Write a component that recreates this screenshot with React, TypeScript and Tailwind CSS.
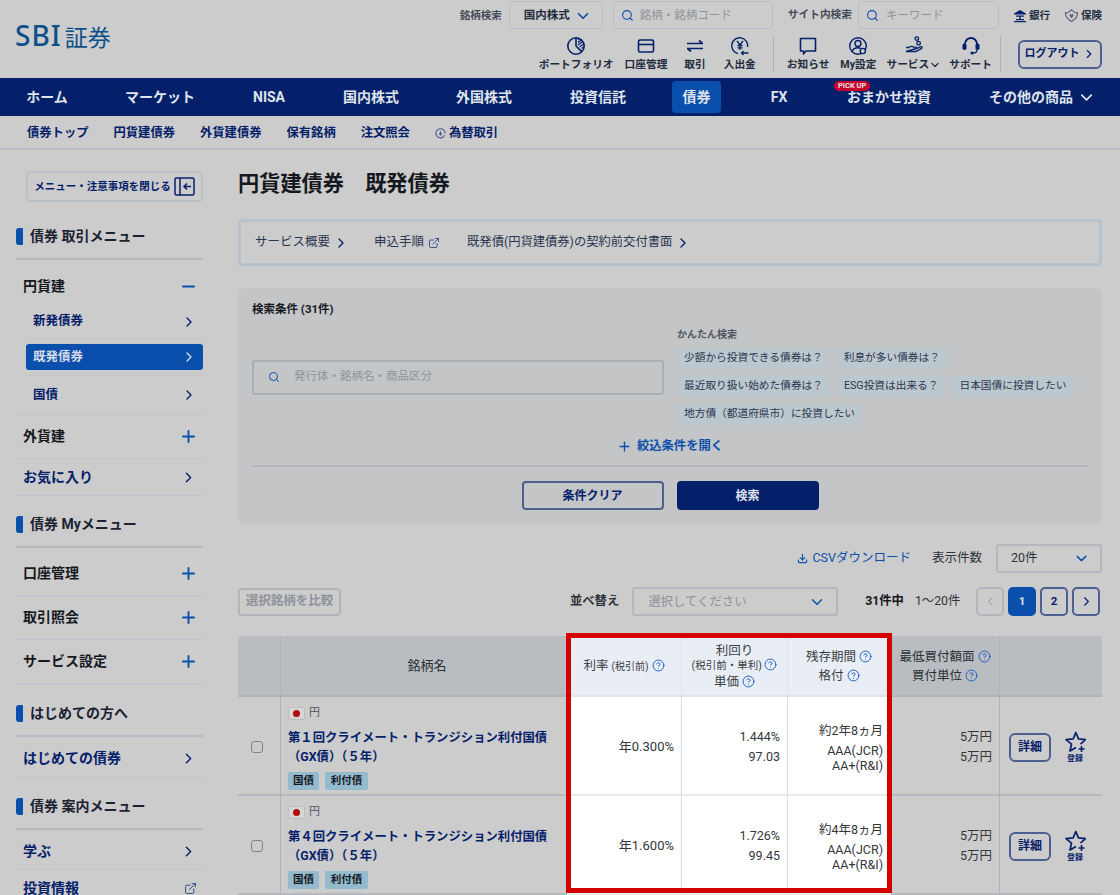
import { ChevronDown, ChevronLeft, ChevronRight, CircleHelp, Download, ExternalLink, Minus, Plus, Search } from "lucide-react";
import type { ReactNode } from "react";

const NAVY = "text-[#04206a]";

function PortfolioIcon() {
  return (
    <svg width="20" height="20" viewBox="0 0 20 20" fill="none" stroke="#04206a" strokeWidth="1.6">
      <circle cx="10" cy="10" r="8.2" />
      <path d="M10 2v8l5.6 5.6" />
      <path d="M12 4l1.5-1M12 6.5l4-3M12 9l5-3.8M13.5 11l4-3M15.5 12.5l2.4-1.8" strokeWidth="1.1" />
    </svg>
  );
}

function CardIcon() {
  return (
    <svg width="20" height="20" viewBox="0 0 20 20" fill="none" stroke="#04206a" strokeWidth="1.6">
      <rect x="2.5" y="4" width="15" height="12" rx="1.5" />
      <path d="M2.5 8.5h15" />
    </svg>
  );
}

function SwapIcon() {
  return (
    <svg width="20" height="20" viewBox="0 0 20 20" fill="none" stroke="#04206a" strokeWidth="1.7">
      <path d="M2 7.5h16M14 4.5l3.5 3M18 12.5H2M6 15.5l-3.5-3" />
    </svg>
  );
}

function YenIcon() {
  return (
    <svg width="20" height="20" viewBox="0 0 20 20" fill="none" stroke="#04206a" strokeWidth="1.4">
      <path d="M8 17.6A8 8 0 1 1 17.6 11" />
      <path d="M7 5l3 4 3-4M10 9v5M7.5 9.5h5M7.5 11.8h5" strokeWidth="1.3" />
      <path d="M11.5 17h7M13.5 15l-2 2 2 2" strokeWidth="1.3" />
    </svg>
  );
}

function ChatIcon() {
  return (
    <svg width="20" height="20" viewBox="0 0 20 20" fill="none" stroke="#04206a" strokeWidth="1.6">
      <path d="M2.5 2.5h15v12.5H8l-2.5 3v-3h-3z" strokeLinejoin="round" />
    </svg>
  );
}

function UserGearIcon() {
  return (
    <svg width="20" height="20" viewBox="0 0 20 20" fill="none" stroke="#04206a" strokeWidth="1.4">
      <circle cx="10" cy="10" r="8.3" />
      <circle cx="10" cy="7.5" r="3" />
      <path d="M4.2 15.5c.8-2.6 3-3.7 5.8-3.7 1 0 2 .2 2.6.5" />
      <circle cx="14.8" cy="15" r="2.6" fill="#cccccc" />
    </svg>
  );
}

function HandIcon() {
  return (
    <svg width="20" height="20" viewBox="0 0 20 20" fill="none" stroke="#04206a" strokeWidth="1.3">
      <circle cx="12.8" cy="2.6" r="1.8" />
      <circle cx="14.6" cy="7.2" r="1.8" />
      <path d="M2 11.5h3c1.5-1.4 3-1.4 4.5-.4h2.5c1.2 0 1.2 1.8 0 1.8H9M13 12.5l3.8-1.8c1.2-.5 1.8 1 .8 1.7L12 15.5H2z" />
    </svg>
  );
}

function HeadsetIcon() {
  return (
    <svg width="20" height="20" viewBox="0 0 20 20" fill="none" stroke="#04206a" strokeWidth="1.8">
      <path d="M4 9.5V8a6 6 0 0 1 12 0v1.5" />
      <rect x="1.5" y="7.5" width="4" height="6.5" rx="1.8" fill="#04206a" stroke="none" />
      <rect x="14.5" y="7.5" width="4" height="6.5" rx="1.8" fill="#04206a" stroke="none" />
      <path d="M16 14c0 2-1.5 3-4 3" strokeWidth="1.3" />
      <circle cx="11" cy="17" r="1.5" fill="#04206a" stroke="none" />
    </svg>
  );
}

function BankIcon() {
  return (
    <svg width="14" height="14" viewBox="0 0 14 14" fill="#04206a">
      <path d="M7 1L13 4.5V5.5H1V4.5z" />
      <rect x="3" y="6.5" width="8" height="1.2" />
      <rect x="6.3" y="7" width="1.4" height="3.5" />
      <rect x="3" y="10" width="8" height="1.2" />
      <rect x="1" y="12" width="12" height="1.2" />
    </svg>
  );
}

function ShieldHeartIcon() {
  return (
    <svg width="15" height="15" viewBox="0 0 16 16" fill="none" stroke="#5b6679" strokeWidth="1.3">
      <path d="M8 14.5C3 11.5 1.2 8.5 1.6 5c1.2.5 2.4.3 3.4-.6L8 1.8l3 2.6c1 .9 2.2 1.1 3.4.6.4 3.5-1.4 6.5-6.4 9.5z" />
      <path d="M8 10.8C6 9.2 5.4 8 6 7c.6-.8 1.5-.6 2 .2.5-.8 1.4-1 2-.2.6 1 0 2.2-2 3.8z" fill="#5b6679" stroke="none" />
    </svg>
  );
}

function StarPlusIcon() {
  return (
    <svg width="22" height="23" viewBox="0 0 22 23" fill="none" stroke="#04206a" strokeWidth="1.7" strokeLinejoin="round">
      <path d="M12 16.4L6 20l1.5-6.8L2 8.6l7.2-.7L11.8 1.5l2.7 6.4 7 .7-5 4.5" />
      <path d="M17.5 15v6M14.5 18h6" strokeWidth="1.6" />
    </svg>
  );
}

function ToolItem({ icon, label, className }: { icon: ReactNode; label: ReactNode; className?: string }) {
  return (
    <div className={`flex flex-col items-center ${className ?? ""}`}>
      <div className="flex h-[20px] items-center">{icon}</div>
      <span className="mt-[2px] flex items-center whitespace-nowrap text-[10.7px] font-bold leading-[14px] text-[#222b3d]">{label}</span>
    </div>
  );
}

function Header() {
  return (
    <header className="flex h-[78px] justify-between">
      <div className="flex items-baseline pl-[15px] pt-[18px] leading-[34px] text-[#0d5089]">
        <span className="text-[28px] font-medium tracking-[1px]" style={{ fontFamily: "'Noto Sans', sans-serif" }}>SBI</span>
        <span className="ml-[3px] text-[23px]" style={{ fontFamily: "'Noto Sans CJK JP', sans-serif" }}>証券</span>
      </div>
      <div className="flex flex-col items-end pr-[18px] pt-px">
        <div className="flex h-[28px] items-center">
          <span className="mr-[7px] pt-px text-[10.5px] font-bold text-[#444b58]">銘柄検索</span>
          <div className="flex h-[28px] w-[94px] items-center justify-between rounded border border-[#b9bec6] pl-[14px] pr-[10px] pt-px text-[11.5px] font-bold text-[#222b3d]">
            国内株式 <ChevronDown size={18} strokeWidth={2.2} className="text-[#0b4ba8]" />
          </div>
          <div className="ml-[10px] flex h-[28px] w-[160px] items-center gap-[6px] rounded border border-[#b9bec6] pl-[7px] pt-px text-[11.5px] text-[#8e939b]">
            <Search size={13} strokeWidth={2} className="text-[#0b4ba8]" /> 銘柄・銘柄コード
          </div>
          <span className="ml-[15px] mr-[6px] pt-px text-[10.7px] font-bold text-[#444b58]">サイト内検索</span>
          <div className="flex h-[28px] w-[141px] items-center gap-[7px] rounded border border-[#b9bec6] pl-[7px] pt-px text-[11.5px] text-[#8e939b]">
            <Search size={13} strokeWidth={2} className="text-[#0b4ba8]" /> キーワード
          </div>
          <span className="ml-[14px] flex items-center gap-[2px] pt-px text-[10.5px] font-bold text-[#1f2b40]"><BankIcon /> 銀行</span>
          <span className="ml-[14px] flex items-center gap-[2px] pt-px text-[10.5px] font-bold text-[#1f2b40]"><ShieldHeartIcon /> 保険</span>
        </div>
        <div className="mt-[7px] flex h-[36px] items-center">
          <ToolItem icon={<PortfolioIcon />} label="ポートフォリオ" />
          <ToolItem icon={<CardIcon />} label="口座管理" className="ml-[11px]" />
          <ToolItem icon={<SwapIcon />} label="取引" className="ml-[17px]" />
          <ToolItem icon={<YenIcon />} label="入出金" className="ml-[18px]" />
          <div className="ml-[17px] mr-[13px] h-[36px] w-px bg-[#aeb3ba]" />
          <ToolItem icon={<ChatIcon />} label="お知らせ" />
          <ToolItem icon={<UserGearIcon />} label="My設定" className="ml-[11px]" />
          <ToolItem icon={<HandIcon />} label={<>サービス<ChevronDown size={12} strokeWidth={2.4} /></>} className="ml-[10px]" />
          <ToolItem icon={<HeadsetIcon />} label="サポート" className="ml-[8px]" />
          <div className="ml-[8px] mr-[17px] h-[36px] w-px bg-[#aeb3ba]" />
          <div className="flex h-[29px] w-[84px] items-center justify-center gap-[2px] rounded-md border-2 border-[#4c5f8f] text-[11px] font-bold text-[#04206a]">
            ログアウト <ChevronRight size={14} strokeWidth={2} />
          </div>
        </div>
      </div>
    </header>
  );
}

function MainNav() {
  const item = "flex h-full items-center justify-center whitespace-nowrap pt-px";
  return (
    <nav className="flex h-[38px] items-stretch bg-[#04206a] text-[14px] font-bold text-[#dfe3ea]">
      <div className={`${item} w-[94px]`}>ホーム</div>
      <div className={`${item} w-[132px]`}>マーケット</div>
      <div className={`${item} w-[86px]`}>NISA</div>
      <div className={`${item} w-[118px]`}>国内株式</div>
      <div className={`${item} w-[108px]`}>外国株式</div>
      <div className={`${item} w-[120px]`}>投資信託</div>
      <div className="ml-[14px] mt-[3px] flex h-[32px] w-[49px] items-center justify-center rounded-sm bg-[#0b4fad]">債券</div>
      <div className={`${item} w-[116px]`}>FX</div>
      <div className={`${item} relative w-[104px]`}>
        おまかせ投資
        <span className="absolute left-[-3px] top-[3px] rounded-full bg-[#c6002a] px-[4px] text-[7.5px] font-bold leading-[10px] text-[#e6e6e6]">PICK UP</span>
      </div>
      <div className={`${item} ml-[48px] gap-[4px]`}>
        その他の商品 <ChevronDown size={19} strokeWidth={2.2} />
      </div>
    </nav>
  );
}

function SubNav() {
  return (
    <div className={`flex h-[34px] items-center gap-[25px] border-b-2 border-[#bcbfc4] pl-[27px] pt-[3px] text-[12.3px] font-bold ${NAVY}`}>
      <span>債券トップ</span>
      <span>円貨建債券</span>
      <span>外貨建債券</span>
      <span>保有銘柄</span>
      <span>注文照会</span>
      <span className="flex items-center gap-[3px]">
        <svg width="11" height="11" viewBox="0 0 12 12" fill="none" stroke="#4c5f8f" strokeWidth="1.2">
          <path d="M10.5 8A5 5 0 1 1 11 6" />
          <path d="M6 3.5v4M4.5 6L6 7.5 7.5 6" />
        </svg>
        為替取引
      </span>
    </div>
  );
}

function SideTitle({ children, className }: { children: ReactNode; className?: string }) {
  return (
    <div className={`flex h-[45px] items-center gap-[7px] border-b-2 border-[#b5bac1] text-[14px] font-bold text-[#1b2230] ${className ?? ""}`}>
      <span className="h-[17px] w-[7px] rounded-l-[3px] rounded-r-[1px] bg-[#0b4fad]" />
      {children}
    </div>
  );
}

function SideRow({ label, kind, top, dark, className }: { label: string; kind: "plus" | "minus" | "chevron" | "external"; top?: boolean; dark?: boolean; className?: string }) {
  return (
    <div className={`flex items-center justify-between pl-[7px] pr-[5px] text-[14px] font-bold ${top ? "" : "border-b border-[#c1c5cb]"} ${dark ? "text-[#16181f]" : NAVY} ${className ?? "h-[44px]"}`}>
      {label}
      {kind === "plus" && <Plus size={19} strokeWidth={2.4} className="text-[#0b4fad]" />}
      {kind === "minus" && <Minus size={19} strokeWidth={2.4} className="text-[#0b4fad]" />}
      {kind === "chevron" && <ChevronRight size={17} strokeWidth={2} className={`mr-[1px] ${NAVY}`} />}
      {kind === "external" && <ExternalLink size={13} strokeWidth={1.8} className="mr-[1px] text-[#2e4a85]" />}
    </div>
  );
}

function Sidebar() {
  const sub = `ml-[10px] flex items-center justify-between pl-[7px] pr-[6px] text-[12.5px] font-bold ${NAVY}`;
  return (
    <aside className="w-[187px] shrink-0">
      <div className={`ml-[10px] mt-[21px] flex h-[31px] items-center justify-center gap-[3px] rounded border-2 border-[#bcc1c8] text-[10.5px] font-bold ${NAVY}`}>
        メニュー・注意事項を閉じる
        <svg width="21" height="19" viewBox="0 0 21 19" fill="none" stroke="#04206a" strokeWidth="1.5">
          <rect x="1" y="1" width="19" height="17" rx="1.5" />
          <path d="M6 1v17M17 9.5h-7M13 6.5l-3 3 3 3" />
        </svg>
      </div>
      <SideTitle className="mt-[13px]">債券 取引メニュー</SideTitle>
      <SideRow label="円貨建" kind="minus" top dark className="h-[45px] pt-[7px]" />
      <div className={`${sub} h-[34px] border-b border-[#c1c5cb]`}>
        新発債券
        <ChevronRight size={16} strokeWidth={2} />
      </div>
      <div className="ml-[10px] border-b border-[#c1c5cb] py-[5px]">
        <div className="flex h-[26px] items-center justify-between rounded-[3px] bg-[#0b4fad] pl-[7px] pr-[6px] text-[12.5px] font-bold text-[#d5dbe6]">
          既発債券
          <ChevronRight size={16} strokeWidth={2} />
        </div>
      </div>
      <div className="border-b border-[#c1c5cb]">
        <div className={`${sub} h-[38px]`}>
          国債
          <ChevronRight size={16} strokeWidth={2} />
        </div>
      </div>
      <SideRow label="外貨建" kind="plus" dark />
      <SideRow label="お気に入り" kind="chevron" className="h-[37px]" />
      <SideTitle className="mt-[7px]">債券 Myメニュー</SideTitle>
      <SideRow label="口座管理" kind="plus" dark className="h-[48px] pt-[4px]" />
      <SideRow label="取引照会" kind="plus" dark />
      <SideRow label="サービス設定" kind="plus" dark />
      <SideTitle className="mt-[8px]">はじめての方へ</SideTitle>
      <SideRow label="はじめての債券" kind="chevron" className="h-[41px] pt-[3px]" />
      <SideTitle className="mt-[7px]">債券 案内メニュー</SideTitle>
      <SideRow label="学ぶ" kind="chevron" className="h-[40px] pt-[3px]" />
      <SideRow label="投資情報" kind="external" top className="h-[36px]" />
    </aside>
  );
}

function Chip({ children }: { children: ReactNode }) {
  return <span className="flex h-[21px] items-center rounded-[3px] bg-[#bdc8ce] px-[7px] text-[10.7px] leading-none text-[#2a3550]">{children}</span>;
}

function LinkBar() {
  return (
    <div className="mt-[21px] flex h-[47px] items-center rounded border-[3px] border-[#b8c2cd] pl-[14px] text-[12.5px] text-[#2a3550]">
      <span className="flex items-center gap-[3px]">サービス概要 <ChevronRight size={16} strokeWidth={2} className={NAVY} /></span>
      <span className="ml-[25px] flex items-center gap-[4px]">申込手順 <ExternalLink size={12} strokeWidth={1.8} className="text-[#2e4a85]" /></span>
      <span className="ml-[27px] flex items-center gap-[3px] text-[12.3px]">既発債(円貨建債券)の契約前交付書面 <ChevronRight size={16} strokeWidth={2} className={NAVY} /></span>
    </div>
  );
}

function SearchPanel() {
  return (
    <section className="mt-[22px] h-[236px] rounded-md bg-[#c3c5c7] px-[14px] pt-[13px]">
      <div className="text-[11.5px] font-bold leading-[16px] text-[#16181f]">検索条件 (31件)</div>
      <div className="mt-[11px] flex h-[101px]">
        <div className="flex w-[412px] items-center pb-[3px]">
          <div className="flex h-[35px] w-full items-center gap-[14px] rounded-[3px] border-2 border-[#a9aeb7] pl-[14px] text-[11.5px] text-[#8e939b]">
            <Search size={12} strokeWidth={2} className="text-[#0b4fad]" /> 発行体・銘柄名・商品区分
          </div>
        </div>
        <div className="ml-[13px]">
          <div className="text-[10px] font-bold leading-[14px] text-[#50555e]">かんたん検索</div>
          <div className="mt-[6px] flex gap-[7px]">
            <Chip>少額から投資できる債券は？</Chip>
            <Chip>利息が多い債券は？</Chip>
          </div>
          <div className="mt-[7px] flex gap-[7px]">
            <Chip>最近取り扱い始めた債券は？</Chip>
            <Chip>ESG投資は出来る？</Chip>
            <Chip>日本国債に投資したい</Chip>
          </div>
          <div className="mt-[7px] flex">
            <Chip>地方債（都道府県市）に投資したい</Chip>
          </div>
        </div>
      </div>
      <div className="mt-[7px] flex h-[20px] items-center justify-center gap-[5px] text-[12.3px] font-bold text-[#0b4fad]">
        <Plus size={15} strokeWidth={2.2} /> 絞込条件を開く
      </div>
      <div className="mt-[9px] border-t-2 border-[#b4b7bf]" />
      <div className="mt-[14px] flex justify-center gap-[13px]">
        <div className={`flex h-[29px] w-[142px] items-center justify-center rounded-[4px] border-2 border-[#4c5f8f] text-[12px] font-bold ${NAVY}`}>条件クリア</div>
        <div className="flex h-[29px] w-[142px] items-center justify-center rounded-[4px] bg-[#04206a] text-[12px] font-bold text-[#dfe3ea]">検索</div>
      </div>
    </section>
  );
}

function PagerBtn({ children, active, disabled }: { children: ReactNode; active?: boolean; disabled?: boolean }) {
  const tone = active
    ? "bg-[#0b4fad] text-[#dfe3ea]"
    : disabled
      ? "border-2 border-[#b1b5bb] text-[#8e939b]"
      : `border-2 border-[#4c5f8f] ${NAVY}`;
  return <div className={`flex h-[29px] w-[28px] items-center justify-center rounded-[5px] text-[11.5px] font-bold ${tone}`}>{children}</div>;
}

function ListControls() {
  return (
    <>
      <div className="mt-[20px] flex h-[29px] items-center justify-end">
        <span className="flex items-center gap-[4px] text-[12.5px] text-[#0b4fad]"><Download size={11} strokeWidth={2.4} /> CSVダウンロード</span>
        <span className="ml-[21px] mr-[14px] text-[12.5px] text-[#30343b]">表示件数</span>
        <div className="flex h-[29px] w-[106px] items-center justify-between rounded-[3px] border-2 border-[#b4b8be] pl-[13px] pr-[10px] text-[12.5px] text-[#30343b]">
          20件 <ChevronDown size={17} strokeWidth={2} className="text-[#0b4fad]" />
        </div>
      </div>
      <div className="mt-[14px] flex h-[29px] items-center">
        <div className="flex h-[28px] w-[103px] items-center justify-center rounded-[4px] border-2 border-[#b1b5bb] text-[12.5px] font-bold text-[#8e939b]">選択銘柄を比較</div>
        <span className="ml-[229px] text-[12.3px] font-bold text-[#30343b]">並べ替え</span>
        <div className="ml-[13px] flex h-[29px] w-[206px] items-center justify-between rounded-[3px] border-2 border-[#b4b8be] pl-[14px] pr-[10px] text-[12.4px] text-[#8e939b]">
          <span className="pt-px">選択してください</span> <ChevronDown size={18} strokeWidth={2} className="text-[#0b4fad]" />
        </div>
        <span className="ml-[27px] text-[12.3px] font-bold text-[#16181f]">31件中</span>
        <span className="ml-[11px] text-[12.3px] text-[#30343b]">1〜20件</span>
        <div className="ml-auto mr-[2px] flex gap-[4px]">
          <PagerBtn disabled><ChevronLeft size={15} strokeWidth={1.6} /></PagerBtn>
          <PagerBtn active>1</PagerBtn>
          <PagerBtn>2</PagerBtn>
          <PagerBtn><ChevronRight size={15} strokeWidth={1.8} /></PagerBtn>
        </div>
      </div>
    </>
  );
}

function Help() {
  return <CircleHelp size={13} strokeWidth={1.7} className="inline-block align-[-2px] text-[#0f58bd]" />;
}

const gridCols = "grid grid-cols-[43px_286px_115px_106px_103px_109px_102px]";

function TableHead() {
  const dim = "flex flex-col items-center justify-center border-b-2 border-r border-[#aeb3b8] bg-[#b9bdc1] text-[12.5px] leading-[19px] text-[#2b2e33]";
  const lit = "flex flex-col items-center justify-center border-b-2 border-r border-[#dde3ec] bg-[#e9eef6] text-[12.5px] leading-[19px] text-[#3a3d42]";
  return (
    <div className={`${gridCols} h-[61px]`}>
      <div className={`${dim} rounded-tl-sm`} />
      <div className={`${dim} pl-[7px] text-[13px]`}>銘柄名</div>
      <div className={lit}>
        <span className="whitespace-nowrap">利率 <span className="text-[10px]">(税引前)</span> <Help /></span>
      </div>
      <div className={lit}>
        <span className="pt-px leading-[15px]">利回り</span>
        <span className="whitespace-nowrap text-[10.5px] leading-[13px]">(税引前・単利) <Help /></span>
        <span className="mt-[2px] leading-[16px]">単価 <Help /></span>
      </div>
      <div className={lit}>
        <span className="whitespace-nowrap">残存期間 <Help /></span>
        <span>格付 <Help /></span>
      </div>
      <div className={dim}>
        <span className="whitespace-nowrap">最低買付額面 <Help /></span>
        <span>買付単位 <Help /></span>
      </div>
      <div className={`${dim} rounded-tr-sm border-r-0`} />
    </div>
  );
}

function BondRow({ name, rate, yieldPct, price, term }: { name: string; rate: string; yieldPct: string; price: string; term: string }) {
  const dim = "border-b-2 border-r border-b-[#b5b9be] border-r-[#aeb3b8]";
  const lit = "border-b-2 border-r border-b-[#e6ebf2] border-r-[#d7dde6] bg-white";
  return (
    <div className={`${gridCols} h-[99px] text-[12.5px]`}>
      <div className={`${dim} flex items-center justify-center pr-[4px] pt-[3px]`}>
        <span className="h-[12px] w-[12px] rounded-[3px] border border-[#7f848b]" />
      </div>
      <div className={`${dim} pl-[7px] pt-[8px]`}>
        <div className="flex items-center gap-[4px] text-[11px] leading-[16px] text-[#50555e]">
          <span className="flex h-[13px] w-[17px] items-center justify-center rounded-[2px] border border-[#bdbdbd] bg-[#d6d6d6]">
            <span className="h-[7px] w-[7px] rounded-full bg-[#b10d0d]" />
          </span>
          円
        </div>
        <div className={`mt-[8px] text-[12.35px] font-bold leading-[19px] ${NAVY}`}>
          <div className="whitespace-nowrap">{name}</div>
          <div>（GX債）（５年）</div>
        </div>
        <div className="mt-[5px] flex gap-[6px]">
          <span className="flex h-[18px] w-[31px] items-center justify-center rounded-[2px] bg-[#93bacd] text-[10.5px] font-bold text-[#16181f]">国債</span>
          <span className="flex h-[18px] w-[43px] items-center justify-center rounded-[2px] bg-[#93bacd] text-[10.5px] font-bold text-[#16181f]">利付債</span>
        </div>
      </div>
      <div className={`${lit} flex items-center justify-end pr-[7px] pt-[3px] text-[13px] text-[#33363b]`}>{rate}</div>
      <div className={`${lit} flex flex-col items-end justify-center pr-[7px] pt-[3px] leading-[20px] text-[#33363b]`}>
        <span>{yieldPct}</span>
        <span>{price}</span>
      </div>
      <div className={`${lit} flex flex-col items-end justify-center pr-[7px] pt-[3px] text-[#33363b]`}>
        <span className="leading-[18px]">{term}</span>
        <span className="mt-[3px] leading-[15px]">AAA(JCR)</span>
        <span className="leading-[15px]">AA+(R&amp;I)</span>
      </div>
      <div className={`${dim} flex flex-col items-end justify-center pr-[7px] pt-[3px] leading-[20px] text-[#33363b]`}>
        <span>5万円</span>
        <span>5万円</span>
      </div>
      <div className="flex items-center border-b-2 border-[#b5b9be] pl-[9px] pt-[3px]">
        <div className={`flex h-[29px] w-[42px] items-center justify-center rounded-[6px] border-2 border-[#4c5f8f] text-[12px] font-bold ${NAVY}`}>詳細</div>
        <div className={`ml-[13px] flex flex-col items-center ${NAVY}`}>
          <StarPlusIcon />
          <span className="text-[8px] font-bold leading-[9px]">登録</span>
        </div>
      </div>
    </div>
  );
}

export default function App() {
  return (
    <div className="relative h-[895px] w-[1120px] overflow-hidden bg-[#cccccc]" style={{ fontFamily: "Roboto, 'Noto Sans CJK JP', sans-serif" }}>
      <Header />
      <MainNav />
      <SubNav />
      <div className="flex pl-[16px] pr-[18px]">
        <Sidebar />
        <main className="ml-[35px] flex-1">
          <h1 className="mt-[20px] text-[21.2px] font-bold leading-[28px] text-[#16181f]">円貨建債券　既発債券</h1>
          <LinkBar />
          <SearchPanel />
          <ListControls />
          <div className="mt-[20px]">
            <TableHead />
            <BondRow name="第１回クライメート・トランジション利付国債" rate="年0.300%" yieldPct="1.444%" price="97.03" term="約2年8ヵ月" />
            <BondRow name="第４回クライメート・トランジション利付国債" rate="年1.600%" yieldPct="1.726%" price="99.45" term="約4年8ヵ月" />
          </div>
        </main>
      </div>
      <div className="absolute left-[566px] top-[633px] h-[260px] w-[326px] border-[5px] border-[#d40000]" />
    </div>
  );
}
